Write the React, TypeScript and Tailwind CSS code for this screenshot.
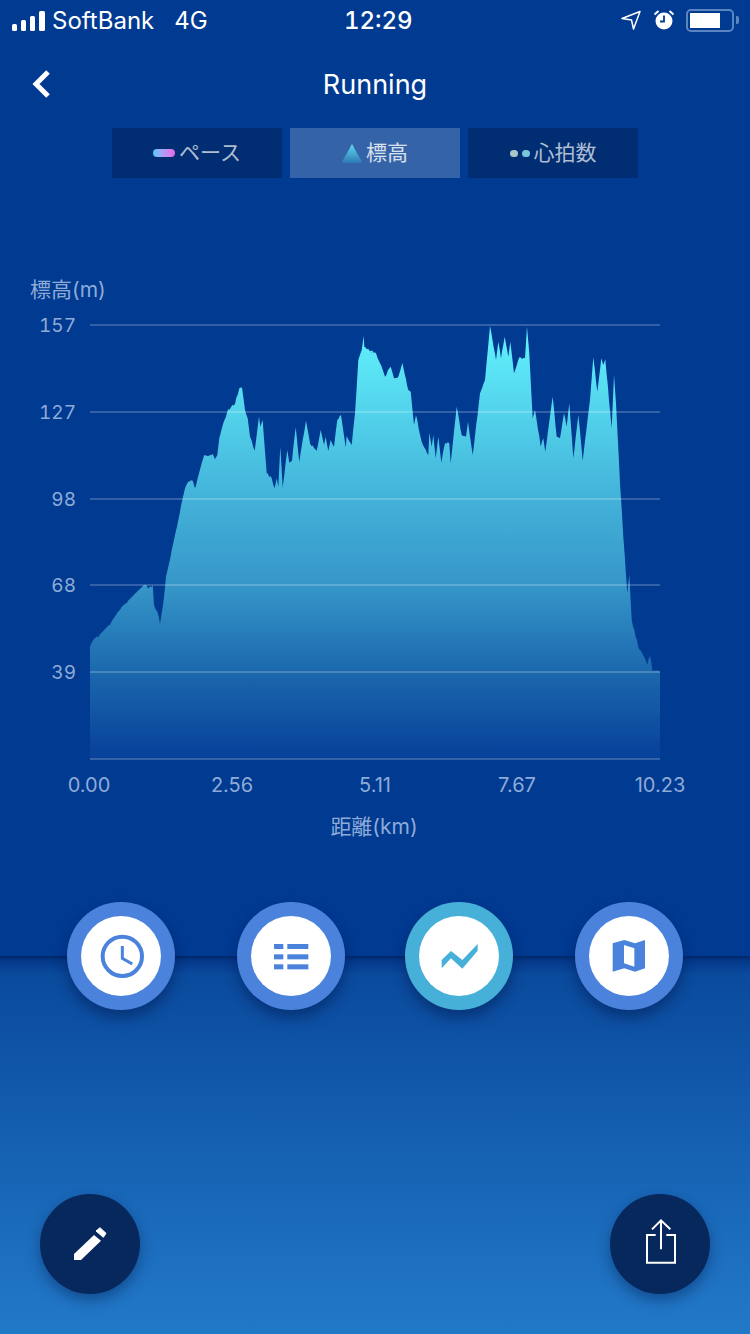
const leftSeg = [
  [30, 1010], [45, 985], [55, 982], [90, 945], [120, 900], [140, 880], [195, 825], [205, 836], [218, 826], [222, 885],
  [232, 905], [240, 942], [250, 880], [258, 800], [265, 770], [280, 700], [295, 630], [308, 565], [315, 535], [325, 515],
  [338, 512], [345, 535], [365, 460], [373, 435], [380, 437], [398, 432], [405, 448], [412, 435], [418, 385], [430, 340],
  [445, 298], [465, 282], [478, 235], [486, 233], [495, 300], [503, 325], [510, 380], [524, 422], [537, 320], [541, 350],
  [548, 330], [560, 490], [575, 505], [584, 535], [590, 505], [595, 530], [601, 410], [608, 532], [622, 420], [628, 458],
  [636, 452], [647, 352], [658, 455], [668, 390], [678, 332], [690, 400], [710, 422], [722, 360], [732, 405], [737, 380],
  [745, 423], [752, 390], [762, 410], [772, 330], [783, 315], [790, 362], [797, 412], [800, 378], [815, 405], [825, 310],
  [835, 150], [845, 120], [851, 78], [853, 110], [888, 130],
];

const rightSeg = [
  [0, 125], [18, 130], [30, 160], [45, 200], [62, 170], [72, 205], [85, 200], [97, 158], [115, 240], [122, 245],
  [132, 345], [138, 315], [155, 395], [175, 435], [178, 368], [185, 410], [190, 375], [197, 445], [205, 380], [214, 458],
  [225, 400], [238, 400], [242, 460], [260, 290], [275, 375], [288, 380], [294, 335], [308, 435], [330, 250], [336, 235],
  [345, 210], [360, 48], [378, 150], [385, 95], [393, 145], [404, 80], [415, 140], [421, 95], [432, 190], [448, 142],
  [465, 145], [471, 50], [478, 130], [488, 325], [495, 300], [512, 410], [520, 385], [526, 425], [548, 260], [560, 380],
  [570, 385], [582, 310], [590, 350], [598, 280], [610, 445], [625, 315], [638, 452], [660, 270], [670, 142], [682, 245],
  [694, 145], [700, 165], [706, 148], [725, 355], [732, 195], [738, 280], [750, 520], [760, 680], [772, 850], [778, 795],
  [785, 930], [805, 1010], [832, 1065], [840, 1037], [848, 1085], [870, 1085],
];

// points were read off 3x crops, map them back to page coords
const elevation = [
  ...leftSeg.map(([x, y]) => [80 + x / 3, 310 + y / 3]),
  ...rightSeg.map(([x, y]) => [370 + x / 3, 310 + y / 3]),
];

// the real track is jagged, roughen the lines between the read points
function roughen(points: number[][]) {
  const out: number[][] = [];
  for (let i = 0; i < points.length - 1; i++) {
    const [x0, y0] = points[i];
    const [x1, y1] = points[i + 1];
    out.push([x0, y0]);
    const steps = Math.floor((x1 - x0) / 1.2);
    for (let s = 1; s < steps; s++) {
      const t = s / steps;
      const x = x0 + (x1 - x0) * t;
      const noise = x < 640 && x > 150 ? Math.sin(x * 12.9898) * 43758.5453 : 0;
      const jitter = (noise - Math.floor(noise) - 0.5) * 2.4;
      out.push([x, y0 + (y1 - y0) * t + jitter]);
    }
  }
  out.push(points[points.length - 1]);
  return out;
}

const areaPath =
  'M90 759 L' + roughen(elevation).map(([x, y]) => `${x.toFixed(1)} ${y.toFixed(1)}`).join(' L') + ' L660 759 Z';

const grid = [
  { y: 325, label: '157' },
  { y: 412, label: '127' },
  { y: 499, label: '98' },
  { y: 585, label: '68' },
  { y: 672, label: '39' },
];
const xTicks = [
  { x: 89, label: '0.00' },
  { x: 232, label: '2.56' },
  { x: 375, label: '5.11' },
  { x: 517, label: '7.67' },
  { x: 660, label: '10.23' },
];

function StatusBar() {
  return (
    <div className="relative flex h-[40px] items-center text-white">
      <div className="ml-[12px] flex h-[20px] items-end gap-[4px] mt-[1px]">
        <div className="h-[7px] w-[5px] rounded-[1.5px] bg-white" />
        <div className="h-[11px] w-[5px] rounded-[1.5px] bg-white" />
        <div className="h-[15px] w-[5px] rounded-[1.5px] bg-white" />
        <div className="h-[20px] w-[6px] rounded-[1.5px] bg-white" />
      </div>
      <span className="ml-[7px] mt-[2px] text-[24px] leading-none">SoftBank</span>
      <span className="ml-[20px] mt-[2px] text-[24px] leading-none">4G</span>
      <span className="absolute left-[344px] top-[8px] text-[24px] font-medium leading-[26px] tabular-nums">12:29</span>
      <div className="ml-auto mr-[11px] flex items-center">
        <svg width="20" height="20" viewBox="0 0 20 20" className="mr-[12px]">
          <path d="M1 8.5 L19 1.5 L12.5 19 L10.5 10 Z" fill="none" stroke="#fff" strokeWidth="1.5" strokeLinejoin="round" />
        </svg>
        <svg width="22" height="22" viewBox="0 0 22 22" className="mr-[11px]">
          <circle cx="11" cy="12" r="8.5" fill="#fff" />
          <path d="M11 6.5 V12.5 H7" fill="none" stroke="#003a91" strokeWidth="1.8" />
          <path d="M1.5 5.5 L5.5 2 M20.5 5.5 L16.5 2" stroke="#fff" strokeWidth="2" />
        </svg>
        <div className="flex h-[23px] w-[48px] items-center rounded-[5px] border-2 border-[#5b85c0] pl-[2px]">
          <div className="h-[15px] w-[30px] bg-white" />
        </div>
        <div className="ml-[2px] h-[8px] w-[3px] rounded-r-[2px] bg-[#5b85c0]" />
      </div>
    </div>
  );
}

function Tab({ label, active, icon }: { label: string; active?: boolean; icon: React.ReactNode }) {
  return (
    <div
      className={`flex h-[50px] w-[170px] items-center justify-center text-[21px] ${
        active ? 'bg-[#3563a8] text-white/80' : 'bg-[#012e73] text-white/70'
      }`}
    >
      {icon}
      <span className="ml-[4px]">{label}</span>
    </div>
  );
}

function ElevationChart() {
  return (
    <svg width="750" height="590" viewBox="0 270 750 590" className="mt-[92px] block">
      <defs>
        <linearGradient id="area" gradientUnits="userSpaceOnUse" x1="0" y1="325" x2="0" y2="759">
          <stop offset="0" stopColor="#62f4fe" />
          <stop offset="0.4" stopColor="#43b2d9" />
          <stop offset="0.6" stopColor="#3696c9" />
          <stop offset="0.8" stopColor="#1b68ad" />
          <stop offset="1" stopColor="#074099" />
        </linearGradient>
      </defs>
      <path d={areaPath} fill="url(#area)" />
      {grid.map((g) => (
        <g key={g.label}>
          <line x1="90" x2="660" y1={g.y} y2={g.y} stroke="#fff" strokeOpacity="0.2" strokeWidth="2" />
          <text x="76" y={g.y + 7} textAnchor="end" fontSize="19" fill="#8eabd8" className="tabular-nums">
            {g.label}
          </text>
        </g>
      ))}
      <line x1="90" x2="660" y1="759" y2="759" stroke="#fff" strokeOpacity="0.2" strokeWidth="2" />
      <text x="30" y="297" fontSize="21" fill="#8eabd8">
        標高(m)
      </text>
      {xTicks.map((t) => (
        <text key={t.label} x={t.x} y="792" textAnchor="middle" fontSize="20" fill="#8eabd8">
          {t.label}
        </text>
      ))}
      <text x="374" y="834" textAnchor="middle" fontSize="21" fill="#8eabd8">
        距離(km)
      </text>
    </svg>
  );
}

function RoundNav({ ring, children, className }: { ring: string; children: React.ReactNode; className?: string }) {
  return (
    <div
      className={`flex h-[108px] w-[108px] items-center justify-center rounded-full shadow-[0_8px_14px_rgba(0,20,70,0.45)] ${ring} ${className ?? ''}`}
    >
      <div className="h-[80px] w-[80px] rounded-full bg-white">{children}</div>
    </div>
  );
}

export default function App() {
  return (
    <div className="flex h-[1334px] w-[750px] flex-col overflow-hidden bg-[#003a91] font-['Inter','Noto_Sans_CJK_JP',sans-serif]">
      <div className="h-[956px] shrink-0">
        <StatusBar />
        <div className="relative flex h-[88px] items-center justify-center pt-[2px] text-[27px] text-white">
          <svg width="20" height="30" viewBox="0 0 20 30" className="absolute left-[31px] top-[29px]">
            <path d="M17 3 L5 15 L17 27" fill="none" stroke="#fff" strokeWidth="5" />
          </svg>
          <span>Running</span>
        </div>
        <div className="flex justify-center gap-[8px]">
          <Tab
            label="ペース"
            icon={<div className="h-[8px] w-[22px] rounded-full bg-gradient-to-r from-[#45c8ff] to-[#e762e8]" />}
          />
          <Tab
            label="標高"
            active
            icon={
              <svg width="20" height="19" viewBox="0 0 20 19">
                <defs>
                  <linearGradient id="tri" x1="0" y1="0" x2="0" y2="1">
                    <stop offset="0" stopColor="#5edcec" />
                    <stop offset="1" stopColor="#3177b5" />
                  </linearGradient>
                </defs>
                <path d="M10 0 L20 18 Q20 19 18 19 L2 19 Q0 19 0 18 Z" fill="url(#tri)" />
              </svg>
            }
          />
          <Tab
            label="心拍数"
            icon={
              <div className="flex gap-[4px]">
                <div className="h-[7px] w-[8px] rounded-full bg-[#a9c6c8]" />
                <div className="h-[7px] w-[8px] rounded-full bg-[#7bc5dc]" />
              </div>
            }
          />
        </div>
        <ElevationChart />
      </div>

      <div className="relative flex-1 bg-[linear-gradient(#00286c_0px,#05398a_5px,#0a4a9d_18px,#2279c8_100%)]">
        <div className="-mt-[54px] flex pl-[67px]">
          <RoundNav ring="bg-[#4a82dc]">
            <svg viewBox="93 78 240 240" className="h-full w-full">
              <circle cx="217" cy="199" r="59" fill="none" stroke="#4a82dc" strokeWidth="12" />
              <path d="M217 168 V205 L247 222" fill="none" stroke="#4a82dc" strokeWidth="9" />
            </svg>
          </RoundNav>
          <RoundNav ring="bg-[#4a82dc]" className="ml-[62px]">
            <svg viewBox="603 78 240 240" className="h-full w-full" fill="#4a82dc">
              <rect x="672" y="162" width="28" height="15" />
              <rect x="712" y="162" width="63" height="15" />
              <rect x="672" y="193" width="28" height="15" />
              <rect x="712" y="193" width="63" height="15" />
              <rect x="672" y="223" width="28" height="15" />
              <rect x="712" y="223" width="63" height="15" />
            </svg>
          </RoundNav>
          <RoundNav ring="bg-[#47b0d8]" className="ml-[60px]">
            <svg viewBox="87 78 240 240" className="h-full w-full">
              <path d="M155 210 L183 183 L217 210 L263 162 V182 L217 236 L183 205 L155 235 Z" fill="#47b0d8" />
            </svg>
          </RoundNav>
          <RoundNav ring="bg-[#4a82dc]" className="ml-[62px]">
            <svg viewBox="597 78 240 240" className="h-full w-full">
              <path d="M668 160 L703 150 L735 160 L765 150 V235 L735 245 L703 235 L668 245 Z" fill="#4a82dc" />
              <path d="M702 165 L733 175 V230 L702 220 Z" fill="#fff" />
            </svg>
          </RoundNav>
        </div>

        <div className="absolute bottom-[40px] left-[40px] right-[40px] flex justify-between">
          <div className="h-[100px] w-[100px] rounded-full bg-[#06285c] shadow-[0_6px_14px_rgba(0,20,70,0.4)]">
            <svg viewBox="60 42 300 300" className="h-full w-full">
              <path d="M162 222 L222 165 L243 182 L183 240 H162 Z" fill="#fff" />
              <path d="M228 153 L240 143 L258 160 L250 172 Z" fill="#fff" stroke="#fff" strokeWidth="3" strokeLinejoin="round" />
            </svg>
          </div>
          <div className="h-[100px] w-[100px] rounded-full bg-[#06285c] shadow-[0_6px_14px_rgba(0,20,70,0.4)]">
            <svg viewBox="60 42 300 300" className="h-full w-full" fill="none" stroke="#fff" strokeWidth="6">
              <path d="M197 165 H171 V248 H255 V165 H229" />
              <path d="M213 122 V208 M186 148 L213 121 L241 148" />
            </svg>
          </div>
        </div>
      </div>
    </div>
  );
}
